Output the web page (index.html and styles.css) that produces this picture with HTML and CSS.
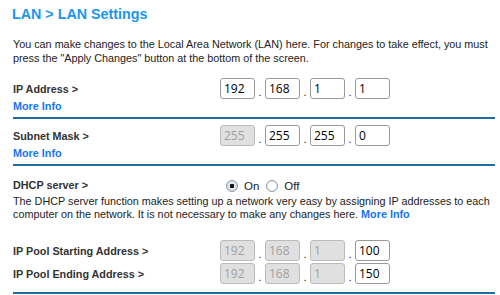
FILE: index.html
```html
<!DOCTYPE html>
<html lang="en">
<head>
    <meta charset="UTF-8">
    <meta name="viewport" content="width=device-width, initial-scale=1.0">
    <title>LAN Settings</title>
    <link rel="stylesheet" href="styles.css">
</head>
<body>
    <h1 class="titulo">LAN &gt; LAN Settings</h1>
    <p class="intro">You can make changes to the Local Area Network (LAN) here. For changes to take effect, you must press the "Apply Changes" button at the bottom of the screen.</p>

    <!-- IP Address -->
    <section class="bloque ip-lan">
        <div class="fila">
            <div class="etiqueta">
                <span class="nombre">IP Address &gt;</span>
                <a class="info" href="#">More Info</a>
            </div>
            <div class="ip">
                <input type="text" value="192"><span>.</span>
                <input type="text" value="168"><span>.</span>
                <input type="text" value="1"><span>.</span>
                <input type="text" value="1">
            </div>
        </div>
    </section>

    <!-- Subnet Mask -->
    <section class="bloque mascara">
        <div class="fila">
            <div class="etiqueta">
                <span class="nombre">Subnet Mask &gt;</span>
                <a class="info" href="#">More Info</a>
            </div>
            <div class="ip">
                <input type="text" value="255" disabled><span>.</span>
                <input type="text" value="255"><span>.</span>
                <input type="text" value="255"><span>.</span>
                <input type="text" value="0">
            </div>
        </div>
    </section>

    <!-- DHCP -->
    <section class="dhcp">
        <div class="fila">
            <div class="etiqueta">
                <span class="nombre">DHCP server &gt;</span>
            </div>
            <div class="radios">
                <label><input type="radio" name="dhcp" checked> On</label>
                <label><input type="radio" name="dhcp"> Off</label>
            </div>
        </div>
        <p class="texto">The DHCP server function makes setting up a network very easy by assigning IP addresses to each computer on the network. It is not necessary to make any changes here. <a class="info" href="#">More Info</a></p>
    </section>

    <!-- Pool -->
    <section class="bloque pool">
        <div class="fila">
            <span class="nombre etiqueta">IP Pool Starting Address &gt;</span>
            <div class="ip">
                <input type="text" value="192" disabled><span>.</span>
                <input type="text" value="168" disabled><span>.</span>
                <input type="text" value="1" disabled><span>.</span>
                <input type="text" value="100">
            </div>
        </div>
        <div class="fila">
            <span class="nombre etiqueta">IP Pool Ending Address &gt;</span>
            <div class="ip">
                <input type="text" value="192" disabled><span>.</span>
                <input type="text" value="168" disabled><span>.</span>
                <input type="text" value="1" disabled><span>.</span>
                <input type="text" value="150">
            </div>
        </div>
    </section>
</body>
</html>
```

FILE: styles.css
```css
/* General */
body {
    margin: 0;
    padding: 0 5px 0 13px;
    font-family: "Liberation Sans", Arial, sans-serif;
    font-size: 10.8px;
    line-height: 14px;
    color: #222;
    background: #fff;
}

.titulo {
    margin: 4px 0 0 -1px;
    font-size: 14.3px;
    line-height: 20px;
    color: #1a96ec;
}

.intro {
    margin: 13px 0 0;
}

/* Blocks that end with a blue line */
.bloque {
    border-bottom: 2px solid #1f6d9e;
}

.fila {
    display: flex;
    align-items: flex-start;
}

.etiqueta {
    width: 207px;
    display: flex;
    flex-direction: column;
}

.nombre {
    font-weight: bold;
    color: #333;
}

.info {
    font-weight: bold;
    color: #1575f0;
    text-decoration: none;
}

.etiqueta .info {
    margin-top: 3px;
}

.ip-lan {
    padding: 17px 0 4px;
}

.mascara {
    padding: 10px 0 4px;
}

/* IP fields */
.ip {
    display: flex;
    align-items: flex-end;
    margin-top: -4px;
}

.ip input {
    width: 35px;
    height: 21px;
    box-sizing: border-box;
    margin: 0;
    padding: 0 3px;
    border: 1px solid #999;
    border-radius: 3px;
    font-family: "Open Sans", "DejaVu Sans", sans-serif;
    font-size: 12px;
    color: #000;
    background: #fff;
}

.ip input:disabled {
    background: #e0e0e0;
    border-color: #bbb;
    color: #a0a0a0;
}

.ip span {
    width: 10px;
    text-align: center;
    font-size: 11px;
    line-height: 14px;
}

/* DHCP */
.dhcp {
    padding-top: 12px;
}

.radios {
    display: flex;
    gap: 7px;
    margin: 1px 0 0 6px;
    font-size: 11.5px;
}

.radios label {
    display: flex;
    align-items: center;
}

.radios input {
    appearance: none;
    margin: 0 6px 0 0;
    width: 12px;
    height: 12px;
    border: 1px solid #8d99a8;
    border-radius: 50%;
    background: radial-gradient(circle, #fff 40%, #dde3ea 100%);
}

.radios input:checked {
    background: radial-gradient(circle, #111 0 2px, #e8ecf1 2.5px, #c9d2dc 100%);
}

.texto {
    margin: 2px 0 0;
    line-height: 13px;
}

/* Pool */
.pool {
    padding: 18px 0 7px;
}

.pool .fila {
    align-items: center;
    height: 23px;
}

.pool .fila .ip {
    margin-top: 0;
}
```
